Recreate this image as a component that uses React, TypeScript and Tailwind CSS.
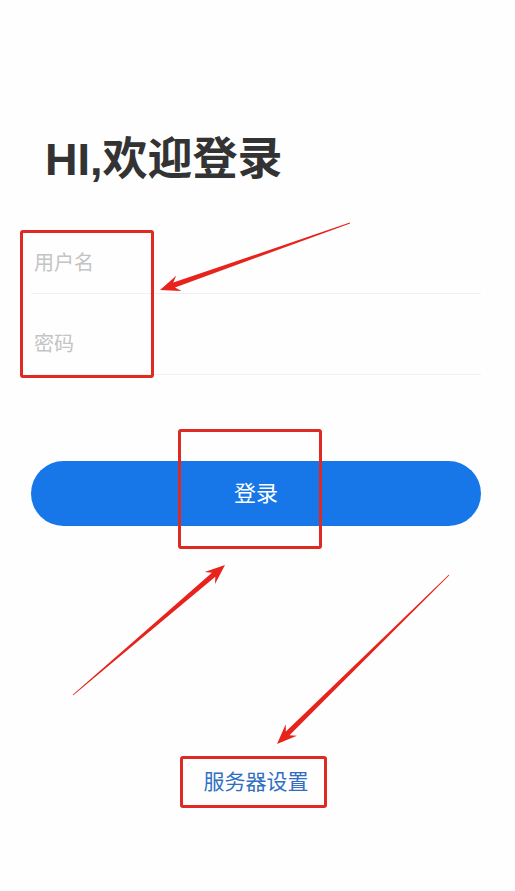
import React from "react";

type Pt = [number, number];

// tapered annotation arrow: thin tail, thick near the head
function arrowPoints(tail: Pt, tip: Pt, head = 20, wing = 8, shaft = 2.6) {
  const dx = tip[0] - tail[0];
  const dy = tip[1] - tail[1];
  const len = Math.hypot(dx, dy);
  const u: Pt = [dx / len, dy / len];
  const n: Pt = [-u[1], u[0]];
  const at = (d: number, w: number): Pt => [tip[0] - u[0] * d + n[0] * w, tip[1] - u[1] * d + n[1] * w];
  const pts: Pt[] = [
    [tail[0] + n[0] * 0.4, tail[1] + n[1] * 0.4],
    at(head * 0.75, shaft),
    at(head, wing),
    tip,
    at(head, -wing),
    at(head * 0.75, -shaft),
    [tail[0] - n[0] * 0.4, tail[1] - n[1] * 0.4],
  ];
  return pts.map((p) => `${p[0].toFixed(1)},${p[1].toFixed(1)}`).join(" ");
}

function Annotations() {
  return (
    <div className="pointer-events-none absolute inset-0">
      <div className="absolute left-[20px] top-[230px] h-[148px] w-[134px] rounded-[3px] border-[3px] border-[#de2a22]" />
      <div className="absolute left-[178px] top-[429px] h-[120px] w-[144px] rounded-[3px] border-[3px] border-[#de2a22]" />
      <div className="absolute left-[180px] top-[756px] h-[52px] w-[147px] rounded-[3px] border-[3px] border-[#de2a22]" />
      <svg className="absolute inset-0" width="515" height="891" viewBox="0 0 515 891">
        <polygon points={arrowPoints([350, 223], [160, 290])} fill="#e8231b" />
        <polygon points={arrowPoints([73, 695], [225, 565])} fill="#e8231b" />
        <polygon points={arrowPoints([449, 575], [277, 744])} fill="#e8231b" />
      </svg>
    </div>
  );
}

export default function App() {
  return (
    <div
      className="relative h-[891px] w-[515px] overflow-hidden bg-[#fefefe]"
      style={{ fontFamily: '"Liberation Sans", "Noto Sans CJK SC", sans-serif' }}
    >
      <div className="flex flex-col pl-[31px] pr-[34px] pt-[137px]">
        <h1 className="pl-[14px] text-[45px] font-bold leading-[45px] text-[#333333]">HI,欢迎登录</h1>

        <div className="mt-[31px] flex flex-col">
          <div className="flex h-[81px] items-end border-b border-[#f0f0f0] px-[3px] pb-[16px]">
            <input
              className="h-[27px] w-full bg-transparent text-[20px] leading-[27px] text-[#333] outline-none placeholder:text-[#c4c4c4]"
              placeholder="用户名"
            />
          </div>
          <div className="flex h-[81px] items-end border-b border-[#f0f0f0] px-[3px] pb-[16px]">
            <input
              type="password"
              className="h-[27px] w-full bg-transparent text-[20px] leading-[27px] text-[#333] outline-none placeholder:text-[#c4c4c4]"
              placeholder="密码"
            />
          </div>
        </div>

        <button className="mt-[86px] flex h-[65px] w-full items-center justify-center rounded-full bg-[#1877e8] text-[22px] text-white">
          登录
        </button>

        <div className="mt-[242px] flex justify-center">
          <span className="text-[21px] leading-[28px] text-[#2f6fc2]">服务器设置</span>
        </div>
      </div>

      <Annotations />
    </div>
  );
}
